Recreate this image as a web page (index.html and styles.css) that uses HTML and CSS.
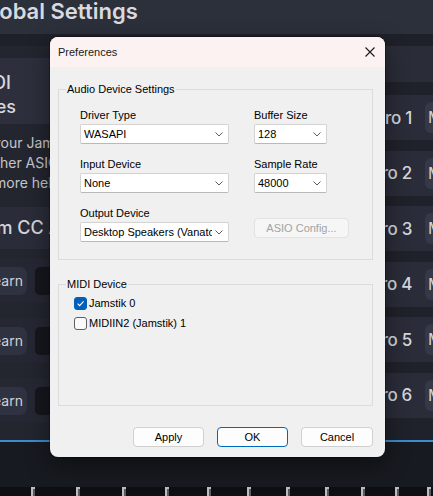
FILE: index.html
```html
<!DOCTYPE html>
<html>
<head>
<meta charset="utf-8">
<title>Preferences</title>
<link rel="stylesheet" href="styles.css">
</head>
<body>
<div class="app">
  <header class="hdr"><h1 class="title">Global Settings</h1></header>
  <div class="band"></div>
  <main class="main">
    <section class="lcol">
      <div class="lcard">
        <div class="l1"><span>MIDI</span></div>
        <div class="l2"><span>Devices</span></div>
      </div>
      <div class="para">
        <div class="p1">your Jamstik device</div>
        <div class="p2">other ASIO driver</div>
        <div class="p3">more help</div>
      </div>
      <div class="ccrow"><span>Custom CC Assign</span></div>
      <div class="lrows">
        <div class="lrow"><div class="lbtn">Learn</div><div class="lbox"></div></div>
        <div class="lrow"><div class="lbtn">Learn</div><div class="lbox"></div></div>
        <div class="lrow"><div class="lbtn">Learn</div><div class="lbox"></div></div>
      </div>
    </section>
    <section class="mid"></section>
    <section class="rcol">
      <div class="rtop"></div>
      <div class="rrows">
        <div class="rrow"><div class="rlab"><span>Macro 1</span></div><div class="mbtn">M</div></div>
        <div class="rrow"><div class="rlab"><span>Macro 2</span></div><div class="mbtn">M</div></div>
        <div class="rrow"><div class="rlab"><span>Macro 3</span></div><div class="mbtn">M</div></div>
        <div class="rrow"><div class="rlab"><span>Macro 4</span></div><div class="mbtn">M</div></div>
        <div class="rrow"><div class="rlab"><span>Macro 5</span></div><div class="mbtn">M</div></div>
        <div class="rrow"><div class="rlab"><span>Macro 6</span></div><div class="mbtn">M</div></div>
      </div>
    </section>
  </main>
  <div class="blue"></div>
  <footer class="foot">
    <div class="keys">
      <i></i><b></b><b></b><b></b><b></b><b></b><b></b><b></b><b></b><b></b><b></b><b></b>
    </div>
  </footer>
</div>

<div class="dialog">
  <div class="tbar">
    <span class="dtitle">Preferences</span>
    <svg class="close" width="10" height="10" viewBox="0 0 10 10"><path d="M0.5 0.5L9.5 9.5M9.5 0.5L0.5 9.5" stroke="#1b1b1b" stroke-width="1.1" fill="none"/></svg>
  </div>
  <div class="dbody">
    <fieldset class="grp grp1">
      <legend>Audio Device Settings</legend>
      <div class="agrid">
        <div class="fld">
          <div class="lbl">Driver Type</div>
          <div class="sel w1"><span class="val">WASAPI</span><svg class="chev" width="8" height="5" viewBox="0 0 8 5"><path d="M0.5 0.5L4 4L7.5 0.5" stroke="#5c5c5c" stroke-width="1" fill="none"/></svg></div>
        </div>
        <div class="fld">
          <div class="lbl">Buffer Size</div>
          <div class="sel w2"><span class="val">128</span><svg class="chev" width="8" height="5" viewBox="0 0 8 5"><path d="M0.5 0.5L4 4L7.5 0.5" stroke="#5c5c5c" stroke-width="1" fill="none"/></svg></div>
        </div>
        <div class="fld">
          <div class="lbl">Input Device</div>
          <div class="sel w1"><span class="val">None</span><svg class="chev" width="8" height="5" viewBox="0 0 8 5"><path d="M0.5 0.5L4 4L7.5 0.5" stroke="#5c5c5c" stroke-width="1" fill="none"/></svg></div>
        </div>
        <div class="fld">
          <div class="lbl">Sample Rate</div>
          <div class="sel w2"><span class="val">48000</span><svg class="chev" width="8" height="5" viewBox="0 0 8 5"><path d="M0.5 0.5L4 4L7.5 0.5" stroke="#5c5c5c" stroke-width="1" fill="none"/></svg></div>
        </div>
        <div class="fld">
          <div class="lbl">Output Device</div>
          <div class="sel w1"><span class="val">Desktop Speakers (Vanatoo T0)</span><svg class="chev" width="8" height="5" viewBox="0 0 8 5"><path d="M0.5 0.5L4 4L7.5 0.5" stroke="#5c5c5c" stroke-width="1" fill="none"/></svg></div>
        </div>
        <div class="fld fend">
          <div class="asio">ASIO Config...</div>
        </div>
      </div>
    </fieldset>
    <fieldset class="grp grp2">
      <legend>MIDI Device</legend>
      <div class="chks">
        <div class="chk"><span class="cb on"><svg width="11" height="11" viewBox="0 0 11 11"><path d="M2.6 5.6L4.6 7.6L8.6 3.4" stroke="#ffffff" stroke-width="1.1" fill="none"/></svg></span><span>Jamstik 0</span></div>
        <div class="chk"><span class="cb"></span><span>MIDIIN2 (Jamstik) 1</span></div>
      </div>
    </fieldset>
    <div class="btns">
      <div class="btn">Apply</div>
      <div class="btn def">OK</div>
      <div class="btn wide">Cancel</div>
    </div>
  </div>
</div>
</body>
</html>
```
FILE: styles.css
```css
* { box-sizing: border-box; margin: 0; padding: 0; }
html, body { width: 433px; height: 496px; overflow: hidden; }
body {
  position: relative;
  background: #1d2028;
  font-family: Inter, "Noto Sans", sans-serif;
  color: #d3d5da;
}

/* ---------- background app ---------- */
.app { width: 433px; height: 496px; display: flex; flex-direction: column; overflow: hidden; }
.hdr { height: 34px; flex: none; background: #2c303b; overflow: hidden; }
.title {
  font-size: 22px; line-height: 22px; font-weight: 600; color: #d8dadf;
  margin-left: -23px; white-space: nowrap;
}
.band { height: 12px; flex: none; background: #1e2129; }
.main {
  height: 394px; flex: none;
  display: grid; grid-template-columns: 50px 1fr 48px;
  background: #22252e;
}

.lcol { overflow: hidden; display: flex; flex-direction: column; padding-top: 12px; background: #23262f; }
.lcard {
  height: 66px; flex: none; background: #2d303c; padding-top: 13px;
  font-size: 18px; line-height: 24px; font-weight: 500; color: #d6d8dc;
}
.l1, .l2 { display: flex; justify-content: flex-end; white-space: nowrap; }
.l1 { width: 11px; }
.l2 { width: 16px; }
.para { margin-top: 9px; font-size: 14px; line-height: 20px; color: #c4c6cc; white-space: nowrap; flex: none; }
.p1 { margin-left: -7px; }
.p2 { margin-left: -13px; }
.p3 { margin-left: -6px; }
.ccrow {
  margin-top: 14px; height: 42px; flex: none; background: #2a2d39;
  font-size: 18px; line-height: 42px; white-space: nowrap; color: #d3d5da; font-weight: 500;
}
.ccrow span { margin-left: -54px; }
.lrows { margin-top: 10px; display: flex; flex-direction: column; gap: 16px; }
.lrow { height: 44px; background: #252833; display: flex; align-items: center; }
.lbtn {
  flex: none; width: 57px; height: 28px; margin-left: -30px;
  background: #2f3341; border-radius: 7px;
  font-size: 14px; line-height: 28px; text-align: right; padding-right: 4px; color: #cfd1d6;
  white-space: nowrap;
}
.lbox { flex: none; width: 40px; height: 28px; margin-left: 8px; background: #15171d; border-radius: 5px; }

.mid { background: #22252e; }

.rcol { overflow: hidden; display: flex; flex-direction: column; background: #1f222a; }
.rtop { height: 36px; flex: none; background: #2a2d38; margin-bottom: 13px; }
.rrows { display: flex; flex-direction: column; gap: 10.6px; }
.rrow { height: 45px; flex: none; background: #2a2d39; display: flex; align-items: center; }
.rlab {
  flex: none; width: 27px; display: flex; justify-content: flex-end;
  white-space: nowrap; font-size: 17px; font-weight: 500; color: #d4d6da; letter-spacing: -0.3px;
}
.mbtn {
  flex: none; margin-left: 13px; width: 40px; height: 31px;
  background: #353947; border-radius: 6px; padding-left: 3px;
  font-size: 16px; line-height: 31px; color: #cfd1d6;
}

.blue { height: 2px; flex: none; background: #3c8dcc; }
.foot { flex: 1; background: #171a20; display: flex; flex-direction: column; justify-content: flex-end; }
.keys {
  height: 9px; background: #0e0f13;
  display: grid;
  grid-template-columns: 31px 45px 46px 43px 42px 40px 39px 39px 36px 34px 32px 10px;
}
.keys b {
  display: block; width: 4px; height: 9px;
  border-left: 2px solid #bdbdbd; border-top: 2px solid #bdbdbd;
  background: #5a5a5a;
}

/* ---------- dialog ---------- */
.dialog {
  position: absolute; left: 50px; top: 37px; width: 335px; height: 420px;
  border-radius: 8px; background: #f0f0f0; overflow: hidden;
  box-shadow: 0 0 0 1px rgba(0,0,0,0.3), 0 8px 24px rgba(0,0,0,0.45);
  font-family: "Liberation Sans", Arial, sans-serif; font-size: 11px; color: #000;
}
.tbar {
  height: 30px; background: #fbf2f1;
  display: flex; align-items: center; justify-content: space-between;
  padding: 0 10px 0 8px;
}
.dtitle { font-size: 11px; color: #1a1a1a; }
.close { display: block; }

.dbody { padding: 15.5px 12px 0 8px; }
.grp { border: 1px solid #dcdcdc; min-width: 0; padding: 0; }
.grp legend { font-size: 11px; line-height: 13px; padding: 0 1px; margin-left: 7px; }
.grp1 { padding: 12.5px 0 17px 0; }
.agrid {
  margin-left: 21px;
  display: grid; grid-template-columns: 149px 95px;
  column-gap: 25px; row-gap: 13px;
}
.fld { display: flex; flex-direction: column; gap: 2px; }
.fend { justify-content: flex-end; }
.lbl { line-height: 14px; height: 14px; }
.sel {
  height: 20px; background: #fff;
  border: 1px solid #d3d3d3; border-bottom-color: #b9b9b9; border-radius: 2px;
  display: flex; align-items: center; padding: 0 5px 0 3px;
}
.w1 { width: 149px; }
.w2 { width: 73px; }
.val { flex: 1; min-width: 0; overflow: hidden; white-space: nowrap; line-height: 18px; }
.chev { flex: none; margin-left: 3px; display: block; }
.asio {
  width: 95px; height: 20px; margin-bottom: 4px;
  border: 1px solid #e2e2e2; border-radius: 4px; background: #f6f6f6;
  color: #a3a3a3; text-align: center; line-height: 18px;
}

.grp2 { margin-top: 17.5px; padding: 2.5px 0 72px 0; }
.chks { margin-left: 15px; }
.chk { height: 20px; display: flex; align-items: center; gap: 2px; }
.cb {
  flex: none; width: 13px; height: 13px; border-radius: 3px;
  border: 1px solid #5f5f5f; background: #fafafa;
  display: flex; align-items: center; justify-content: center;
}
.cb.on { background: #005fb8; border-color: #005fb8; }
.cb svg { display: block; }

.btns { margin-top: 21px; display: flex; justify-content: flex-end; gap: 13px; }
.btn {
  width: 71px; height: 20px; border: 1px solid #d0d0d0; border-radius: 4px;
  background: #fdfdfd; text-align: center; line-height: 18px;
}
.btn.wide { width: 72px; }
.btn.def { border-color: #0067c0; }
```
